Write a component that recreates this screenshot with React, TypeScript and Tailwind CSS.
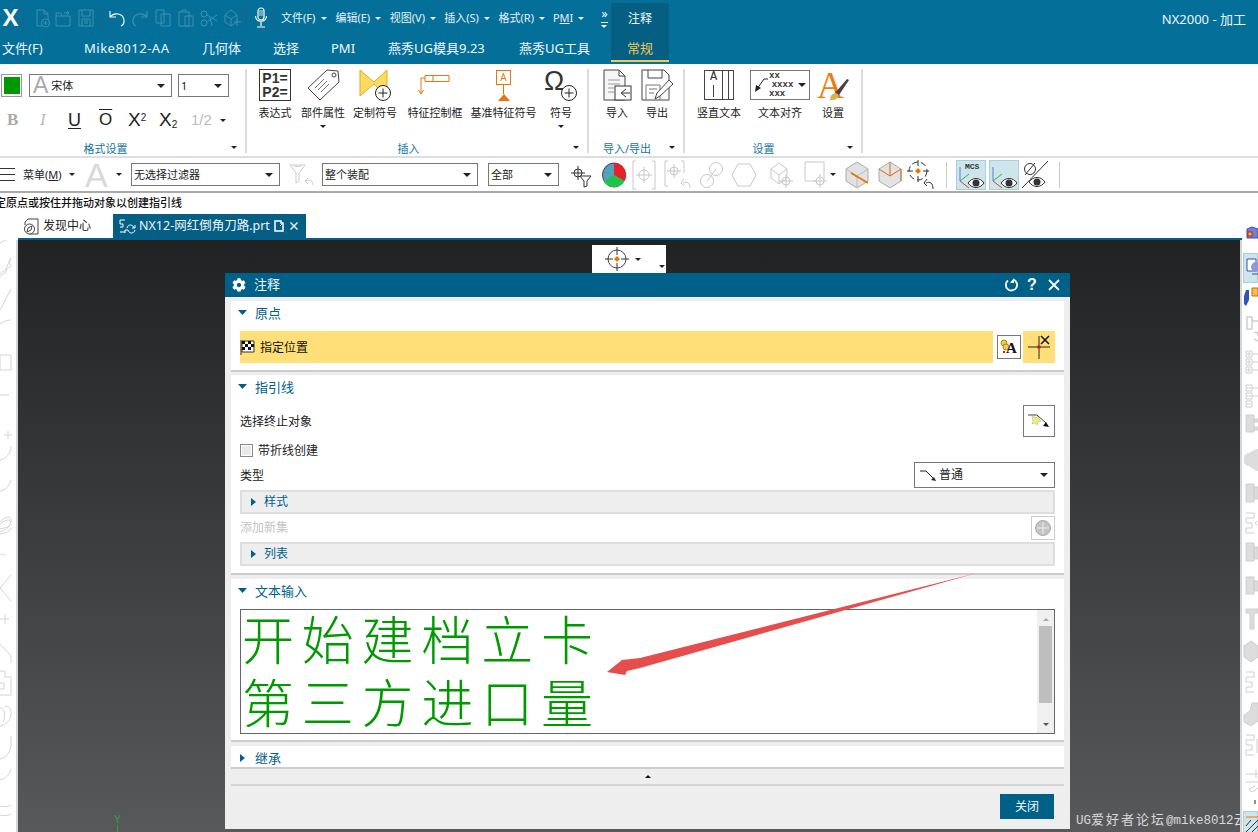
import type { ReactNode } from "react";
import { FaCog } from "react-icons/fa";

const ink = "#333";
const faded = "#3f8fae";
const off = "#c8c8c8";

function Caret({ color = "#222", up = false, big = false }: { color?: string; up?: boolean; big?: boolean }) {
  if (big) {
    return (
      <svg width="8" height="4" viewBox="0 0 8 4" className="shrink-0">
        <path d="M0 0h8L4 4z" fill={color} />
      </svg>
    );
  }
  return (
    <svg width="6" height="3" viewBox="0 0 6 3" className="shrink-0">
      <path d={up ? "M0 3h6L3 0z" : "M0 0h6L3 3z"} fill={color} />
    </svg>
  );
}

function Side({ open = false }: { open?: boolean }) {
  return (
    <svg width="10" height="8" viewBox="0 0 10 8" className="shrink-0">
      {open ? <path d="M0 1h9L4.500 6z" fill="#006088" /> : <path d="M2 0l5 4-5 4z" fill="#006088" />}
    </svg>
  );
}

function Ico({ w = 20, h = 20, children }: { w?: number; h?: number; children: ReactNode }) {
  return (
    <svg width={w} height={h} viewBox={`0 0 ${w} ${h}`} fill="none" className="shrink-0 overflow-visible">
      {children}
    </svg>
  );
}

function Sep() {
  return <div className="h-[24px] w-px shrink-0 bg-[#2b5f78]" />;
}

function Cell({ w, children }: { w: string; children: ReactNode }) {
  return <div className={`flex shrink-0 items-center justify-center ${w}`}>{children}</div>;
}

function QuickBar() {
  return (
    <div className="flex h-[34px] items-center pt-[2px] text-[11px] text-[#e8f2f6]">
      <div className="flex w-[23px] shrink-0 justify-center pr-[2px] font-['Liberation_Sans',sans-serif] text-[24px] font-bold leading-none text-white">X</div>
      <Sep />
      <div className="ml-[7px] flex">
        <Cell w="w-[22px]">
          <Ico><path d="M5 2h7l4 4v6M5 2v16h5M12 2v4h4" stroke={faded} /><circle cx="13.500" cy="15" r="4" stroke={faded} /><path d="M11.500 15h4M13.500 13v4" stroke={faded} /></Ico>
        </Cell>
        <Cell w="w-[22px]">
          <Ico><path d="M2 8h14v10H2zM2 8V5h5l1 3M10 5h5l-2-2M15 5l-2 2" stroke={faded} /></Ico>
        </Cell>
        <Cell w="w-[22px]">
          <Ico><path d="M3 2h14v16H3zM6 2v6h8V2M6 18v-7h8v7M8 13h4M8 15h4" stroke={faded} /></Ico>
        </Cell>
      </div>
      <div className="ml-1"><Sep /></div>
      <div className="ml-[3px] flex">
        <Cell w="w-[23px]">
          <Ico><path d="M3 3v6h6M3 9c4-5 13-4 14 3 .4 3-1 5-3 6" stroke="#f2f7fa" strokeWidth="1.200" /></Ico>
        </Cell>
        <Cell w="w-[23px]">
          <Ico><path d="M17 3v6h-6M17 9c-4-5-13-4-14 3-.4 3 1 5 3 6" stroke={faded} strokeWidth="1.200" /></Ico>
        </Cell>
        <Cell w="w-[23px]">
          <Ico><path d="M3 2h8v13H3zM8 6h9v12H8z" stroke={faded} /></Ico>
        </Cell>
        <Cell w="w-[23px]">
          <Ico><path d="M3 4h10v14H3zM6 4V2h4v2M9 8h8v10H9z" stroke={faded} /></Ico>
        </Cell>
        <Cell w="w-[23px]">
          <Ico><circle cx="5" cy="6" r="3" stroke={faded} /><circle cx="5" cy="15" r="3" stroke={faded} /><path d="M8 7l10 6M8 14l10-7M11 10l2 8" stroke={faded} /></Ico>
        </Cell>
        <Cell w="w-[23px]">
          <Ico><path d="M3 7l6-5 6 5v7l-6 4-6-4zM3 7l6 4 6-4M9 11v7M12 14h7M15 11v7" stroke={faded} /></Ico>
        </Cell>
      </div>
      <div className="ml-[2px]"><Sep /></div>
      <div className="ml-[3px]">
        <Cell w="w-[23px]">
          <Ico w={14} h={22}><rect x="4" y="1" width="6" height="12" rx="3" stroke="#fff" strokeWidth="1.200" /><path d="M5 4h4M5 6h4M5 8h4" stroke="#fff" strokeWidth=".8" /><path d="M1.500 9c0 7 11 7 11 0M7 15v4M3 20h8" stroke="#fff" strokeWidth="1.200" /></Ico>
        </Cell>
      </div>
      <div className="ml-[2px]"><Sep /></div>
      <div className="ml-[6px] flex">
        {["文件(F)", "编辑(E)", "视图(V)", "插入(S)", "格式(R)"].map((m) => (
          <div key={m} className="flex w-[54.400px] shrink-0 items-center">
            <span className="w-[40px] whitespace-nowrap">{m}</span>
            <Caret color="#eef6f9" />
          </div>
        ))}
        <div className="flex w-[34px] items-center">
          <span className="w-[25px]">P<span className="underline">M</span>I</span>
          <Caret color="#eef6f9" />
        </div>
      </div>
      <div className="ml-[14px] flex flex-col items-center text-white">
        <span className="text-[12px] leading-[10px]">»</span>
        <div className="mt-[3px] h-px w-[7px] bg-white" />
        <div className="mt-[2px]"><Caret color="#fff" /></div>
      </div>
    </div>
  );
}

function TabBar() {
  return (
    <div className="flex h-[30px] items-center pl-[2px] text-[13px] text-[#f2f8fa]">
      <div className="w-[82px] shrink-0 whitespace-nowrap">文件(F)</div>
      <div className="w-[118px] shrink-0 whitespace-nowrap tracking-[0.500px]">Mike8012-AA</div>
      <div className="w-[71px] shrink-0 whitespace-nowrap">几何体</div>
      <div className="w-[58px] shrink-0 whitespace-nowrap">选择</div>
      <div className="w-[57px] shrink-0 whitespace-nowrap">PMI</div>
      <div className="w-[131px] shrink-0 whitespace-nowrap">燕秀UG模具9.23</div>
      <div className="w-[92px] shrink-0 whitespace-nowrap">燕秀UG工具</div>
    </div>
  );
}

function Header() {
  return (
    <div className="flex h-16 shrink-0 bg-[#04709a]">
      <div className="w-[611px] shrink-0">
        <QuickBar />
        <TabBar />
      </div>
      <div className="mt-[3px] flex h-[59px] w-[58px] shrink-0 flex-col items-center border-b-2 border-[#f2c94c] bg-[#055f83]">
        <div className="mt-[7px] text-[12px] leading-[18px] text-[#f2f8fa]">注释</div>
        <div className="mt-[11px] text-[13px] leading-[18px] text-[#f2c94c]">常规</div>
      </div>
      <div className="flex-1 pr-[12px] pt-[10px] text-right text-[13px] leading-[18px] text-[#eef6f9]">NX2000 - 加工</div>
    </div>
  );
}

function Group({ w, label, pad, children }: { w: string; label: string; pad: string; children: ReactNode }) {
  return (
    <div className={`mt-[5px] flex h-[84px] shrink-0 flex-col border-r-2 border-[#dcdcdc] ${w}`}>
      <div className="flex min-h-0 flex-1">{children}</div>
      <div className={`relative -mb-[3px] flex h-[15px] shrink-0 items-center justify-center text-[11px] leading-none text-[#16769e] ${pad}`}>
        {label}
        <div className="absolute right-[8px] top-[5px]"><Caret /></div>
      </div>
    </div>
  );
}

function Tool({ cls, icon, label, menu = false }: { cls: string; icon: ReactNode; label: string; menu?: boolean }) {
  return (
    <div className={`flex shrink-0 flex-col items-center ${cls}`}>
      <div className="flex h-8 items-center justify-center">{icon}</div>
      <div className="mt-[5px] whitespace-nowrap text-[11px] leading-[14px] text-[#222]">{label}</div>
      {menu && <div className="mt-[5px]"><Caret /></div>}
    </div>
  );
}

function PlusBadge() {
  return (
    <>
      <circle cx="24" cy="24" r="7.500" fill="#fff" stroke="#222" />
      <path d="M19.500 24h9M24 19.500v9" stroke="#222" />
    </>
  );
}

function Select({ cls, text, icon }: { cls: string; text: string; icon?: ReactNode }) {
  return (
    <div className={`flex h-[23px] shrink-0 items-center border border-[#777] bg-white pl-[2px] pr-[6px] text-[11px] text-[#222] ${cls}`}>
      {icon}
      <span className="flex-1 whitespace-nowrap pt-[2px]">{text}</span>
      <Caret big />
    </div>
  );
}

function FormatGroup() {
  return (
    <Group w="w-[247px]" label="格式设置" pad="pr-[34px]">
      <div className="pl-[1px] pt-[5px]">
        <div className="flex items-center">
          <div className="flex h-[23px] w-[21px] items-center justify-center border border-[#999]">
            <div className="h-[17px] w-[16px] bg-[#009900]" />
          </div>
          <Select
            cls="ml-[7px] w-[143px]"
            text="宋体"
            icon={<span className="ml-[1px] mr-[3px] font-['Liberation_Sans',sans-serif] text-[23px] leading-none text-[#aaa]">A</span>}
          />
          <Select cls="ml-[6px] w-[51px]" text="1" />
        </div>
        <div className="mt-[9px] flex h-[28px] items-center font-['Liberation_Sans',sans-serif] text-[#222]">
          <span className="ml-[6px] w-[33px] font-['Liberation_Serif',serif] text-[17px] font-bold text-[#aaa]">B</span>
          <span className="w-[28px] font-['Liberation_Serif',serif] text-[17px] italic text-[#bbb]">I</span>
          <span className="w-[31px] text-[18px] underline underline-offset-2">U</span>
          <span className="w-[29px] text-[17px] overline">O</span>
          <span className="w-[31px] text-[19px]">X<sup className="text-[10px]">2</sup></span>
          <span className="w-[32px] text-[19px]">X<sub className="text-[10px]">2</sub></span>
          <span className="w-[29px] text-[15px] text-[#bbb]">1/2</span>
          <Caret />
        </div>
      </div>
    </Group>
  );
}

function InsertGroup() {
  return (
    <Group w="w-[342px]" label="插入" pad="pr-[17px]">
      <Tool
        cls="ml-[10px] w-[36px]"
        label="表达式"
        icon={
          <div className="flex h-8 w-8 flex-col items-center justify-center border border-[#333] font-['Liberation_Sans',sans-serif] text-[14px] font-bold leading-[14px] text-[#333]">
            <span>P1=</span>
            <span>P2=</span>
          </div>
        }
      />
      <Tool
        cls="ml-[7px] w-[46px]"
        label="部件属性"
        menu
        icon={
          <Ico w={33} h={32}>
            <path d="M1 19L20 1l11 1 1 11-19 18z" stroke="#444" />
            <circle cx="27" cy="6" r="2" stroke="#444" />
            <path d="M8 19l9-9M11 21l9-9M14 23l8-8" stroke="#777" />
          </Ico>
        }
      />
      <Tool
        cls="ml-[6px] w-[46px]"
        label="定制符号"
        icon={
          <Ico w={33} h={32}>
            <path d="M1 1l14 12L28 1v26L15 15 1 27z" fill="#fbdc63" stroke="#e6a91c" />
            <PlusBadge />
          </Ico>
        }
      />
      <Tool
        cls="ml-[9px] w-[56px]"
        label="特征控制框"
        icon={
          <Ico w={30} h={32}>
            <path d="M5 6.500h8v6H5zM5 9H1v15M13 6.500h16v6H13" stroke="#e8760c" />
            <path d="M-1.500 21L1 25l2.500-4" stroke="#e8760c" />
          </Ico>
        }
      />
      <Tool
        cls="ml-[7px] w-[67px]"
        label="基准特征符号"
        icon={
          <div className="flex flex-col items-center">
            <div className="flex h-[15px] w-[15px] items-center justify-center border border-[#e8760c] text-[10px] leading-none text-[#e8760c]">A</div>
            <div className="h-[9px] w-px bg-[#e8760c]" />
            <div className="h-0 w-0 border-x-[6px] border-b-[7px] border-x-transparent border-b-[#e8760c]" />
          </div>
        }
      />
      <Tool
        cls="ml-[7px] w-[34px]"
        label="符号"
        menu
        icon={
          <Ico w={34} h={32}>
            <text x="0" y="21" fontSize="27" fontFamily="Liberation Sans" fill={ink}>Ω</text>
            <g transform="translate(1 0)"><PlusBadge /></g>
          </Ico>
        }
      />
    </Group>
  );
}

function IoGroup() {
  return (
    <Group w="w-[96px]" label="导入/导出" pad="pr-[18px]">
      <Tool
        cls="ml-[16px] w-[24px]"
        label="导入"
        icon={
          <Ico w={30} h={32}>
            <path d="M2 1h15l6 6v24H2zM17 1v6h6" stroke="#444" fill="#f7f7f7" />
            <path d="M6 11h12M6 15h12M6 19h6M6 23h6" stroke="#999" />
            <rect x="13" y="17" width="16" height="14" fill="#fff" stroke={ink} />
            <path d="M28 24h-8M24 20l-5 4 5 4" stroke={ink} />
          </Ico>
        }
      />
      <Tool
        cls="ml-[16px] w-[24px]"
        label="导出"
        icon={
          <Ico w={32} h={32}>
            <path d="M1 1h22l5 5v25H1zM7 1v8h14V1" stroke="#444" fill="#fff" />
            <path d="M5 31V16h14v15M8 20h8M8 24h5" stroke="#777" />
            <path d="M14 30l2-6 12-13 4 4-13 12z" fill="#fff" stroke="#444" />
          </Ico>
        }
      />
    </Group>
  );
}

function SettingGroup() {
  return (
    <Group w="w-[178px]" label="设置" pad="pr-[19px]">
      <Tool
        cls="ml-[12px] w-[44px]"
        label="竖直文本"
        icon={
          <div className="flex h-[30px] w-[30px] justify-between border border-[#444] pl-[5px] pr-[4px] font-['Liberation_Mono',monospace] text-[12px] leading-[12px] text-[#333]">
            <div className="flex flex-col items-center">
              <span>A</span>
              <div className="mt-[2px] h-[12px] w-px bg-[#444]" />
            </div>
            <div className="h-full w-px bg-[#444]" />
            <div className="h-full w-px bg-[#444]" />
          </div>
        }
      />
      <Tool
        cls="ml-[16px] w-[46px]"
        label="文本对齐"
        icon={
          <div className="-mx-[7px] flex h-[30px] w-[60px] shrink-0 items-center border border-[#777] pl-[4px] pr-[3px]">
            <Ico w={14} h={16}><path d="M13 2H9L2 12" stroke="#222" /><path d="M0 15l1-7 5 3z" fill="#222" /></Ico>
            <div className="flex w-[28px] flex-col items-center font-['Liberation_Mono',monospace] text-[9px] font-bold leading-[9px] text-[#333]">
              <span className="self-start">xx</span>
              <span>xxxx</span>
              <span className="self-start">xxx</span>
            </div>
            <div className="ml-[2px]"><Caret big /></div>
          </div>
        }
      />
      <Tool
        cls="ml-[17px] w-[26px]"
        label="设置"
        icon={
          <Ico w={34} h={32}>
            <text x="1" y="29" fontSize="37" fontFamily="Liberation Serif" fill="#ee7d0f">A</text>
            <path d="M19 24l12-14 2 1-10 15z" fill="#444" />
            <path d="M14 31c0-5 4-8 8-6 1 4-3 7-8 6z" fill="#d8b24c" />
          </Ico>
        }
      />
    </Group>
  );
}

function Ribbon() {
  return (
    <div className="flex h-[94px] shrink-0 border-b-2 border-[#dedede] bg-white">
      <FormatGroup />
      <InsertGroup />
      <IoGroup />
      <SettingGroup />
    </div>
  );
}

function Reticle({ x, y, r = 5, color = off }: { x: number; y: number; r?: number; color?: string }) {
  return (
    <>
      <circle cx={x} cy={y} r={r} stroke={color} />
      <path d={`M${x - r - 3} ${y}h${2 * r + 6}M${x} ${y - r - 3}v${2 * r + 6}`} stroke={color} />
    </>
  );
}

function Eye({ x = 16, y = 22 }: { x?: number; y?: number }) {
  return (
    <>
      <path d={`M${x - 8} ${y}c4-6 12-6 16 0c-4 6-12 6-16 0z`} stroke={ink} fill="#fff" />
      <circle cx={x} cy={y} r="3.500" fill={ink} />
    </>
  );
}

function Toolbar() {
  return (
    <div className="flex h-[35px] shrink-0 items-center border-b-2 border-[#aaaaaa] bg-white text-[11px] text-[#222]">
      <div className="flex w-[15px] flex-col gap-[5px]">
        <div className="h-px w-full bg-[#333]" />
        <div className="h-px w-full bg-[#333]" />
        <div className="h-px w-full bg-[#333]" />
      </div>
      <span className="ml-[8px] w-[46px] whitespace-nowrap pt-[2px]">菜单(<span className="underline">M</span>)</span>
      <Caret />
      <span className="ml-[10px] w-[31px] font-['Liberation_Sans',sans-serif] text-[34px] leading-none text-[#d8d8d8]">A</span>
      <Caret />
      <Select cls="ml-[9px] w-[149px]" text="无选择过滤器" />
      <div className="ml-[9px]">
        <Ico w={26} h={26}>
          <path d="M1 3h15L10 11v8l-3 2V11zM4 3c0 2 9 2 9 0" stroke="#ccc" />
          <path d="M24 23c0-4-3-6-7-4M19 16l-3 3 3 3" stroke="#ccc" />
        </Ico>
      </div>
      <Select cls="ml-[7px] w-[156px]" text="整个装配" />
      <Select cls="ml-[10px] w-[71px]" text="全部" />
      <div className="ml-[10px]">
        <Ico w={24} h={26}>
          <Reticle x={9} y={11} r={4} color={ink} />
          <path d="M11 14h11l-4 5v5l-3 1v-6z" fill="#fff" stroke={ink} />
        </Ico>
      </div>
      <div className="ml-[9px]">
        <Ico w={24} h={26}>
          <ellipse cx="12" cy="13" rx="11.500" ry="12" fill="#55a0bb" stroke="#444" />
          <path d="M12 13V1a12 12 0 0 1 10.400 18z" fill="#e8202a" />
          <path d="M12 13l10.400 6a12 12 0 0 1-20.800 0z" fill="#21c44a" />
        </Ico>
      </div>
      <div className="ml-[1px] flex items-center">
        <Cell w="w-[34px]">
          <Ico w={26} h={30}>
            <path d="M5 1H2v28h3M21 1h3v28h-3" stroke={off} />
            <Reticle x={13} y={15} r={5} />
          </Ico>
        </Cell>
        <Cell w="w-[32px]">
          <Ico w={28} h={30}>
            <path d="M5 1H2v25h3M18 1h3v12" stroke={off} />
            <Reticle x={11} y={11} r={4} />
            <path d="M27 28c0-5-3-7-7-5M21 19l-3 4 3 3" stroke={off} />
          </Ico>
        </Cell>
        <Cell w="w-[36px]">
          <Ico w={26} h={30}>
            <circle cx="9" cy="21" r="6.500" stroke={off} />
            <circle cx="18" cy="9" r="6.500" stroke={off} />
            <path d="M9 21l9-12" stroke={off} />
          </Ico>
        </Cell>
        <Cell w="w-[30px]">
          <Ico w={26} h={26}>
            <path d="M7 2h12l6 11-6 11H7L1 13z" stroke={off} />
          </Ico>
        </Cell>
        <Cell w="w-[46px]">
          <Ico w={26} h={28}>
            <path d="M2 8l8-6 8 6v9l-8 6-8-6zM2 8l8 6 8-6M10 14v9" stroke={off} />
            <Reticle x={17} y={20} r={4} />
          </Ico>
        </Cell>
        <Cell w="w-[22px]">
          <Ico w={26} h={30}>
            <path d="M2 2h19v19H2z" stroke={off} />
            <circle cx="17" cy="21" r="4" fill="#fff" stroke={off} />
            <path d="M10 21h14M17 14v14" stroke={off} />
          </Ico>
        </Cell>
        <div className="ml-[3px]"><Caret /></div>
      </div>
      <div className="ml-[4px] flex items-center">
        <Cell w="w-[34px]">
          <Ico w={26} h={30}>
            <path d="M13 2l11 7v12l-11 7L2 21V9z" fill="#e2e2e2" stroke="#aaa" />
            <path d="M2 9l11 7 11-7M13 16v12" stroke="#bbb" />
            <path d="M7 13l17 10" stroke="#e8760c" strokeWidth="2" />
          </Ico>
        </Cell>
        <Cell w="w-[32px]">
          <Ico w={26} h={30}>
            <path d="M13 2l11 7v12l-11 7L2 21V9z" fill="#e2e2e2" stroke="#aaa" />
            <path d="M13 2v14M13 16L2 9M13 16l11-7M24 9v12" stroke="#d96a14" />
          </Ico>
        </Cell>
        <Cell w="w-[28px]">
          <Ico w={28} h={32}>
            <circle cx="12" cy="12" r="9" stroke={ink} strokeDasharray="6 3" />
            <path d="M12 1v6M12 17v6M1 12h6M17 12h6" stroke={ink} />
            <path d="M12 9l3 3-3 3-3-3z" fill="#e8760c" />
            <path d="M27 30c0-6-3-8-7-6M21 20l-3 4 3 3" stroke={ink} />
          </Ico>
        </Cell>
      </div>
      <div className="ml-[12px] h-[26px] w-px bg-[#ccc]" />
      <div className="ml-[9px] flex h-[30px] w-[30px] items-center justify-center border border-[#a9d0da] bg-[#cde5eb]">
        <Ico w={28} h={28}>
          <text x="8" y="8" fontSize="8" fontFamily="Liberation Mono" fontWeight="700" fill={ink}>MCS</text>
          <path d="M3 20V6" stroke="#4a84d8" />
          <path d="M3 20l9-7" stroke="#2bb64a" />
          <path d="M3 20l9 7" stroke="#e03b3b" />
          <Eye x={19} y={22} />
        </Ico>
      </div>
      <div className="ml-[3px] flex h-[30px] w-[30px] items-center justify-center border border-[#a9d0da] bg-[#cde5eb]">
        <Ico w={28} h={28}>
          <path d="M3 20V6" stroke="#4a84d8" />
          <path d="M3 20l9-7" stroke="#2bb64a" />
          <path d="M3 20l9 7" stroke="#e03b3b" />
          <Eye x={19} y={22} />
        </Ico>
      </div>
      <div className="ml-[2px]">
        <Ico w={28} h={30}>
          <circle cx="9" cy="9" r="5.500" stroke={ink} />
          <path d="M1 28L27 1M4 15L14 3" stroke={ink} />
          <Eye x={16} y={22} />
        </Ico>
      </div>
      <div className="ml-[10px] h-[26px] w-px bg-[#ccc]" />
    </div>
  );
}

function FileTabs() {
  return (
    <div className="relative flex h-[28px] shrink-0 items-end bg-white pl-[18px] pr-[16px]">
      <div className="flex w-full border-b-2 border-[#055f85]">
        <div className="flex h-[24px] w-[95px] items-center pl-[5px] text-[12px] text-[#222]">
          <Ico w={16} h={18}>
            <path d="M5 2h10v15H6M5 2L2 5v3" stroke="#444" />
            <circle cx="6.500" cy="12" r="5" stroke="#444" fill="#fff" />
            <path d="M9 9l-4 2-1 4 4-2z" stroke="#444" />
          </Ico>
          <span className="ml-[4px]">发现中心</span>
        </div>
        <div className="flex h-[24px] w-[193px] items-center bg-[#055f85] pl-[5px] text-[12.500px] text-[#eef6f9]">
          <Ico w={18} h={18}>
            <path d="M7 3H2v4h3v3H2M2 15h5" stroke="#fff" />
            <path d="M9 11c1-4 6-4 7 0M17 13c-1 4-6 4-7 0M14 11h3V8M10 13H7v3" stroke="#fff" />
          </Ico>
          <span className="ml-[3px] w-[134px] whitespace-nowrap">NX12-网红倒角刀路.prt</span>
          <Ico w={12} h={12}><path d="M2 1h6v2h2v8H2z" stroke="#fff" strokeWidth="1.500" /><path d="M7 6l3-3" stroke="#fff" /></Ico>
          <span className="ml-[3px]">
            <Ico w={12} h={12}><path d="M2.500 2.500l7 7M9.500 2.500l-7 7" stroke="#dbe8ee" strokeWidth="1.600" /></Ico>
          </span>
        </div>
      </div>
      <div className="absolute bottom-[1px] right-0">
        <Ico w={12} h={13}>
          <path d="M1 3l5-2 6 2v9H1z" fill="#6d83d0" stroke="#3a4fa8" />
          <rect x="2" y="6" width="4" height="4" fill="#f6c14a" stroke="#e01010" />
        </Ico>
      </div>
    </div>
  );
}

function LeftRail() {
  const g = "#d4d4d4";
  return (
    <div className="w-[18px] shrink-0 overflow-hidden border-r-2 border-[#d5d5d5] bg-white">
      <svg width="16" height="592" viewBox="0 0 16 592" fill="none">
        <g stroke={g}>
          <path d="M0 3L11 -3M0 34l6-5 1-3 4-8-2 5 2 3-4 3-2 4-5 3M0 70L11 49M0 84c4-3 7-4 11-4" />
          <path d="M0 115h11v15H0zM0 155h9" />
          <path d="M4 195h8M8 191v8M11 207c0 6-5 12-11 13M11 240c-1 5-5 10-11 11" />
          <path d="M0 282c7-7 12-6 11 -1c0 5-6 10-11 11M0 284c6-5 10-5 11-2M0 289c6-1 11-3 11-5M0 294c6-1 11-3 11-6M0 314c2 1 3 1 5 0" />
          <path d="M11 335L0 348l11 13" />
          <path d="M0 379h9M5 374v10M0 404l11 12v7" />
          <path d="M0 431h5v6h6v18H0M0 443h4v6H0" />
          <path d="M5 466c5 0 7 5 6 9c-1 6-5 10-11 11M0 468c5 0 6 8 3 14" />
          <path d="M11 496v8c0 8-5 14-11 15M11 529c-1 5-5 10-11 11M0 566c4 1 8 1 11-1M0 575c4 1 8 1 11-1" />
        </g>
      </svg>
    </div>
  );
}

function RightRail() {
  const g = "#cfcfcf";
  return (
    <div className="flex w-[18px] shrink-0 flex-col overflow-hidden border-l-2 border-[#d5d5d5] bg-white pl-[1px]">
      <div className="mt-[13px] flex h-[30px] shrink-0 items-center border border-[#a9d0da] bg-[#cde5eb] pl-[2px]">
        <Ico w={14} h={20}>
          <path d="M1 1h9v12H1z" fill="#fff" stroke="#3a4fa8" />
          <circle cx="10" cy="9" r="5" fill="#8b9bd6" />
          <path d="M6 16h8" stroke="#3a4fa8" />
        </Ico>
      </div>
      <svg width="15" height="528" viewBox="0 0 15 528" fill="none" className="shrink-0">
        <path d="M3 7h3v10l-3 6-2-2v-8z" fill="#2f55b8" />
        <path d="M9 5h6v8H9z" fill="#f6c14a" stroke="#c66a10" />
        <g stroke={g}>
          <path d="M4 34h5v12H4zM9 38h6M11 50c3-2 4 0 4 3M11 56l4 2" strokeWidth="1.500" />
          <g transform="translate(0 8)">
            <path d="M3 60h6v6H3zM3 68h6v6H3zM3 76h6v6H3zM9 63h6M9 71h6M9 79h6M4 63h4M6 61v4M4 71h4M6 69v4M4 79h4M6 77v4" />
            <path d="M3 94h6v6H3zM3 102h6v6H3zM3 110h6v6H3zM9 97h6M9 105h6M4 97h4M4 105h4M4 113h4" />
          </g>
        </g>
        <path d="M3 132h8v17H3zM11 136h4v3h-4zM11 144h4v3h-4z" fill="#ddd" stroke={g} />
        <path d="M1 175c0-5 5-5 5-5l7-4h2v22h-2l-7-5s-5 0-5-5z" fill="#ddd" />
        <path d="M3 201h8v18H3zM11 204h4v12h-4z" fill="#ddd" stroke={g} />
        <path d="M3 230h8v5H3v5h6v5H3v5h8M14 238l-2 2 2 2" stroke={g} />
        <path d="M3 260h8v18H3zM11 264h4v12h-4z" fill="#ddd" stroke={g} />
        <path d="M3 294h8v17H3zM11 298h4v10h-4z" fill="#ddd" stroke={g} />
        <path d="M3 326h12v4H11v16H7V330H3z" fill="#ddd" stroke={g} />
        <path d="M1 363l7-5 7 5v11l-7 5-7-5z" fill="#ddd" stroke={g} />
        <path d="M3 389h8v5H3v5h6v5H3v5h8" stroke={g} />
        <path d="M1 432l6-4 2-8h6v18l-7 5-7-4z" fill="#ddd" stroke={g} />
        <path d="M3 452h8v5H3v5h6v5H3v5h8M14 456v14" stroke={g} />
        <path d="M13 487v8M3 491h12M3 499h12M12 503l-6 3 3 3 6-4" stroke={g} />
        <path d="M12 517v4" stroke="#222" />
      </svg>
      <div className="h-[24px] shrink-0 border border-[#a9d0da] bg-[#cde5eb] pl-[2px] pt-[2px]">
        <Ico w={14} h={20}>
          <path d="M0 3h14" stroke="#e8760c" />
          <path d="M0 18L12 6M4 20L14 10M0 12l5-6" stroke={ink} />
        </Ico>
      </div>
    </div>
  );
}

function SectionTitle({ text, open = true }: { text: string; open?: boolean }) {
  return (
    <div className="flex h-[23px] shrink-0 items-center pl-[7px] text-[13px] text-[#006088]">
      <Side open={open} />
      <span className="ml-[7px] pt-[2px] leading-none">{text}</span>
    </div>
  );
}

function SubBar({ text }: { text: string }) {
  return (
    <div className="mx-[9px] flex h-[24px] items-center border-2 border-[#dedede] bg-[#eeeeee] pl-[7px] text-[12px] text-[#006088]">
      <Side />
      <span className="ml-[5px]">{text}</span>
    </div>
  );
}

function Dialog() {
  return (
    <div className="absolute left-[207px] top-[33px] flex h-[556px] w-[845px] flex-col bg-[#eeeeee]">
      <div className="flex h-6 shrink-0 items-center bg-[#006088] pl-[7px] pr-[9px] text-[13px] text-[#f3f8fa]">
        <FaCog className="h-[14px] w-[14px] text-white" />
        <span className="ml-[8px]">注释</span>
        <div className="ml-auto flex items-center gap-[8px]">
          <Ico w={14} h={14}>
            <path d="M3 2.500a5.600 5.600 0 1 0 5.500-.8" stroke="#fff" strokeWidth="1.800" />
            <path d="M9 0v5H5z" fill="#fff" />
          </Ico>
          <span className="w-[12px] font-['Liberation_Sans',sans-serif] text-[16px] font-bold leading-none text-white">?</span>
          <Ico w={14} h={14}><path d="M2 2l10 10M12 2L2 12" stroke="#fff" strokeWidth="1.800" /></Ico>
        </div>
      </div>

      <div className="mx-[6px] mt-[4px] flex h-[71px] shrink-0 flex-col border-b-2 border-[#cccccc] bg-white">
        <SectionTitle text="原点" />
        <div className="mx-[9px] mt-[7px] flex">
          <div className="flex h-[32px] w-[753px] items-center bg-[#ffdf77] text-[12px] text-[#111]">
            <Ico w={16} h={16}>
              <path d="M1 1v15" stroke={ink} strokeWidth="1" />
              <path d="M2 2h12v11H2z" fill="#fff" stroke={ink} />
              <path d="M2 2h3v3H2zM8 2h3v3H8zM5 5h3v3H5zM11 5h3v3h-3zM2 8h3v3H2zM8 8h3v3H8z" fill="#111" />
            </Ico>
            <span className="ml-[4px] pt-[2px]">指定位置</span>
          </div>
          <div className="ml-[4px] mt-[4px] flex h-[24px] w-[24px] items-center justify-center border border-[#777] bg-white">
            <Ico w={20} h={20}>
              <circle cx="5" cy="6" r="3" fill="#f1c94a" stroke="#a88a1c" />
              <circle cx="7" cy="10" r="3" fill="#f1c94a" stroke="#a88a1c" />
              <rect x="4" y="14" width="2" height="2" fill="#e01010" />
              <text x="7" y="16" fontSize="15" fontWeight="700" fontFamily="Liberation Serif" fill="#111">A</text>
            </Ico>
          </div>
          <div className="ml-[2px] flex h-[32px] w-[32px] items-center justify-center bg-[#ffdf77]">
            <Ico w={24} h={24}>
              <path d="M1 12h22M12 1v23" stroke="#222" />
              <rect x="10.500" y="10.500" width="3" height="3" fill="#e01010" />
              <path d="M14 1l8 8M22 1l-8 8" stroke="#111" strokeWidth="1.500" />
            </Ico>
          </div>
        </div>
      </div>

      <div className="mx-[6px] mt-[3px] flex h-[200px] shrink-0 flex-col border-b-2 border-[#cccccc] bg-white text-[12px] text-[#222]">
        <SectionTitle text="指引线" />
        <div className="mt-[7px] flex h-[32px] shrink-0 items-center justify-between px-[9px]">
          <span className="pt-[2px]">选择终止对象</span>
          <div className="flex h-[32px] w-[32px] items-center justify-center border border-[#777]">
            <Ico w={24} h={18}>
              <path d="M5 4l4 2 2-2 1 3 2 2-3 1-1 3-2-2-3 1 1-3z" fill="#f2ee6b" stroke="#a8a8a8" strokeWidth=".5" />
              <path d="M1 3h9l9 8" stroke="#444" />
              <path d="M22 15l-6-1 3-4z" fill="#111" />
            </Ico>
          </div>
        </div>
        <div className="mt-[1px] flex h-[24px] shrink-0 items-center pl-[9px]">
          <div className="h-[13px] w-[13px] border border-[#888] bg-[#e9e9e9] shadow-[inset_0_0_0_1px_#fff]" />
          <span className="ml-[5px] pt-[2px]">带折线创建</span>
        </div>
        <div className="flex h-[26px] shrink-0 items-center justify-between px-[9px]">
          <span className="pt-[2px]">类型</span>
          <div className="flex h-[26px] w-[141px] items-center border border-[#777] bg-white pl-[4px] pr-[6px]">
            <Ico w={18} h={14}>
              <path d="M1 3h6l8 8" stroke="#222" />
              <path d="M17 13l-5-1 3-3z" fill="#222" />
            </Ico>
            <span className="ml-[2px] flex-1">普通</span>
            <Caret big />
          </div>
        </div>
        <div className="mt-[2px] shrink-0"><SubBar text="样式" /></div>
        <div className="flex h-[28px] shrink-0 items-center justify-between px-[9px] text-[#c4c4c4]">
          <span>添加新集</span>
          <div className="flex h-[24px] w-[24px] items-center justify-center border border-[#ccc]">
            <Ico w={16} h={16}>
              <circle cx="8" cy="8" r="7.500" fill="#c4c4c4" stroke="#aaa" />
              <path d="M2 8h12M8 2v12" stroke="#eee" />
            </Ico>
          </div>
        </div>
        <div className="shrink-0"><SubBar text="列表" /></div>
      </div>

      <div className="mx-[6px] mt-[4px] flex h-[163px] shrink-0 flex-col border-b-2 border-[#cccccc] bg-white">
        <SectionTitle text="文本输入" />
        <div className="mx-[9px] mt-[7px] flex h-[125px] border border-[#666]">
          <div className="flex-1 overflow-hidden pl-[1px] text-[52px] font-light leading-[63px] tracking-[7.800px] text-[#009900]">
            <div className="-mt-[2px] whitespace-nowrap">开始建档立卡</div>
            <div className="whitespace-nowrap">第三方进口量</div>
          </div>
          <div className="flex w-[17px] flex-col items-center bg-[#f0f0f0] pb-[7px] pt-[8px]">
            <Caret up color="#aaa" />
            <div className="my-[5px] w-[13px] flex-1 bg-[#bebebe]" />
            <div className="h-[15px]" />
            <Caret color="#555" />
          </div>
        </div>
      </div>

      <div className="mx-[6px] mt-[4px] h-[23px] shrink-0 border-b-2 border-[#cccccc] bg-white">
        <SectionTitle text="继承" open={false} />
      </div>
      <div className="mx-[6px] flex h-[17px] shrink-0 items-center justify-center border-b-2 border-[#d5d5d5]">
        <Caret up color="#111" />
      </div>
      <div className="flex flex-1 items-start justify-end pr-[16px] pt-[8px]">
        <div className="flex h-[25px] w-[54px] items-center justify-center bg-[#006088] text-[12px] text-[#f3f8fa]">关闭</div>
      </div>
    </div>
  );
}

function Canvas() {
  return (
    <div className="relative min-w-0 flex-1 overflow-hidden bg-gradient-to-b from-[#212224] to-[#58595b]">
      <div className="absolute left-[574px] top-[5px] flex h-[28px] w-[74px] items-center bg-white pl-[12px]">
        <Ico w={26} h={28}>
          <circle cx="13" cy="14" r="9" stroke="#444" />
          <path d="M13 2v8M13 18v8M1 14h8M17 14h8" stroke={ink} />
          <path d="M13 11l3 3-3 3-3-3z" fill="#e8760c" />
        </Ico>
        <div className="ml-[5px]"><Caret /></div>
        <div className="ml-[18px] mt-[14px]"><Caret /></div>
      </div>
      <div className="absolute bottom-0 left-[96px] font-['Liberation_Sans',sans-serif] text-[10px] leading-[10px] text-[#34a03c]">
        <div>Y</div>
        <div className="ml-[3px] h-[7px] w-px bg-[#34a03c]" />
      </div>
      <Dialog />
    </div>
  );
}

export default function App() {
  return (
    <div className="relative flex h-[832px] w-[1258px] flex-col overflow-hidden bg-white font-['Noto_Sans','Noto_Sans_CJK_SC','Liberation_Sans',sans-serif]">
      <Header />
      <Ribbon />
      <Toolbar />
      <div className="-ml-[5px] flex h-[19px] shrink-0 items-center whitespace-nowrap bg-white pt-[2px] text-[11px] font-medium text-[#111]">
        定原点或按住并拖动对象以创建指引线
      </div>
      <FileTabs />
      <div className="flex min-h-0 flex-1">
        <LeftRail />
        <Canvas />
        <RightRail />
      </div>
      <svg width="400" height="110" viewBox="0 0 400 110" fill="none" className="pointer-events-none absolute left-[600px] top-[570px]">
        <path d="M377 3L40 88 22 90 7 102 25 105 27 101 40 98z" fill="#e84d4d" />
      </svg>
      <div className="pointer-events-none absolute bottom-[3px] left-[1076px] whitespace-nowrap font-['Liberation_Mono',monospace] text-[12.500px] leading-[16px] text-[#d9d9d9]">
        UG<span className="font-['Noto_Sans_CJK_SC',sans-serif] text-[13px] tracking-[2px]">爱好者论坛</span>@mike8012<span className="font-['Noto_Sans_CJK_SC',sans-serif] text-[13px]">云</span>
      </div>
    </div>
  );
}
